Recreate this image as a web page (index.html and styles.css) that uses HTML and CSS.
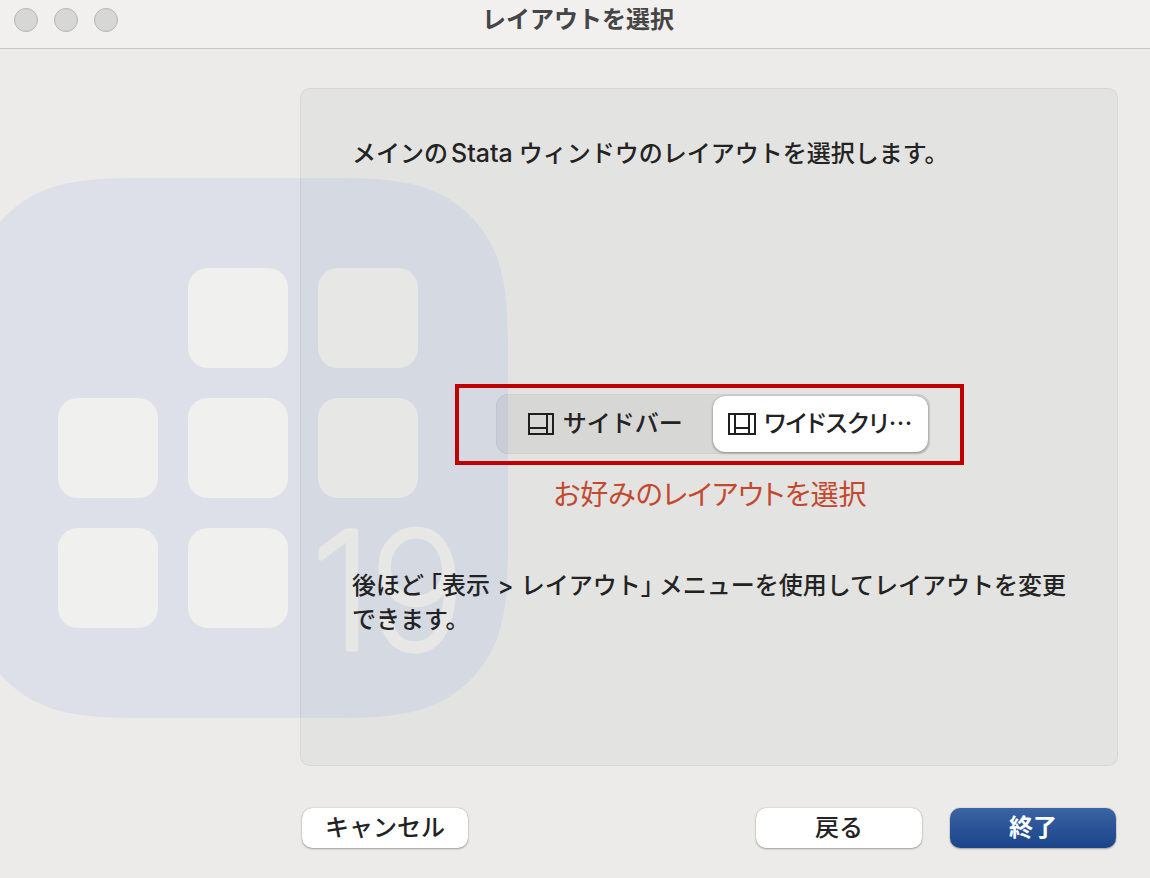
FILE: index.html
```html
<!DOCTYPE html>
<html lang="ja">
<head>
<meta charset="utf-8">
<meta name="viewport" content="width=device-width, initial-scale=1">
<title>レイアウトを選択</title>
<link rel="stylesheet" href="styles.css">
</head>
<body>
<div class="window">
  <header class="titlebar">
    <div class="lights"><span class="light"></span><span class="light"></span><span class="light"></span></div>
    <h1 class="title">レイアウトを選択</h1>
  </header>
  <svg class="logo" viewBox="0 0 540 540" aria-hidden="true">
    <path class="logo-base" d="M199 0H341C399 0 427 0 458 10C492 22 518 48 530 82C540 113 540 141 540 199V341C540 399 540 427 530 458C518 492 492 518 458 530C427 540 399 540 341 540H199C141 540 113 540 82 530C48 518 22 492 10 458C0 427 0 399 0 341V199C0 141 0 113 10 82C22 48 48 22 82 10C113 0 141 0 199 0Z"/>
    <g class="logo-tile">
      <rect x="220" y="90" width="100" height="100" rx="20"/>
      <rect x="350" y="90" width="100" height="100" rx="20"/>
      <rect x="90" y="220" width="100" height="100" rx="20"/>
      <rect x="220" y="220" width="100" height="100" rx="20"/>
      <rect x="350" y="220" width="100" height="100" rx="20"/>
      <rect x="90" y="350" width="100" height="100" rx="20"/>
      <rect x="220" y="350" width="100" height="100" rx="20"/>
    </g>
    <text class="logo-version" x="343 402" y="471">19</text>
  </svg>
  <main class="panel">
    <p class="text">メインの<span class="latin">Stata</span>ウィンドウのレイアウトを選択します。</p>
    <fieldset class="choice" aria-label="レイアウト">
      <div class="segments">
        <div class="segment">
          <input class="segment-input" type="radio" name="layout" id="sidebar">
          <label class="segment-label" for="sidebar">
            <svg class="segment-icon" width="28" height="22" viewBox="0 0 28 22" aria-hidden="true"><path d="M2 1H26V21H2ZM20 1V21M2 15H20"/></svg>
            <span>サイドバー</span>
          </label>
        </div>
        <div class="segment">
          <input class="segment-input" type="radio" name="layout" id="wide" checked>
          <label class="segment-label" for="wide">
            <svg class="segment-icon" width="28" height="22" viewBox="0 0 28 22" aria-hidden="true"><path d="M1 1H27V21H1ZM7 1V21M21 1V21M7 15H21"/></svg>
            <span class="tight">ワイドスクリ…</span>
          </label>
        </div>
      </div>
    </fieldset>
    <p class="note">お好みのレイアウトを選択</p>
    <p class="text">後ほど<span class="open">「</span>表示<span class="arrow"> &gt; </span>レイアウト<span class="close">」</span>メニューを使用してレイアウトを変更できます。</p>
  </main>
  <footer class="actions">
    <button class="button" type="button">キャンセル</button>
    <div class="actions-end">
      <button class="button" type="button">戻る</button>
      <button class="button primary" type="button">終了</button>
    </div>
  </footer>
</div>
</body>
</html>
```
FILE: styles.css
```css
* { box-sizing: border-box; }

body {
  margin: 0;
  background: #ecebe9;
  color: #232323;
  font-family: "Noto Sans CJK JP", sans-serif;
  font-size: 24px;
  font-weight: 500;
  line-height: 34px;
}

.window {
  position: relative;
  display: flex;
  flex-direction: column;
  min-height: 100vh;
  overflow: hidden;
}

.titlebar {
  display: grid;
  grid-template-columns: 1fr auto 1fr;
  align-items: start;
  padding: 0 8px 12px 14px;
  background: #f1f0ee;
  border-bottom: 1px solid #c6c5c3;
}

.lights { display: flex; gap: 16px; padding-top: 8px; }

.light {
  width: 24px;
  height: 24px;
  border: 1px solid #b5b5b3;
  border-radius: 50%;
  background: #d7d7d5;
}

.title {
  margin: 0;
  color: #454545;
  font-size: 24px;
  font-weight: 700;
  line-height: 36px;
}

/* Watermark behind the panel, bleeding off the left edge */
.logo {
  position: absolute;
  top: 178px;
  left: -32px;
  width: 540px;
  height: 540px;
}

.logo-base { fill: #dde0e8; }
.logo-tile { fill: #f0f0ee; }

.logo-version {
  fill: #f0f0ee;
  stroke: #f0f0ee;
  stroke-width: 5px;
  stroke-linejoin: round;
  font-family: Inter, sans-serif;
  font-size: 162px;
  font-weight: 200;
}

.panel {
  position: relative;
  flex: 1;
  display: flex;
  flex-direction: column;
  margin: 39px 32px 0 300px;
  padding: 46px 49px 46px 51px;
  border: 1px solid rgba(0, 0, 0, 0.06);
  border-radius: 10px;
  background: rgba(60, 84, 84, 0.047);
}

.text { margin: 0; }

.latin {
  margin: 0 6px 0 3px;
  font-family: Inter, sans-serif;
  font-size: 25px;
  line-height: 24px;
}

.arrow {
  margin: 0 1px;
  font-family: Inter, sans-serif;
  line-height: 24px;
}

.open, .close { font-feature-settings: "halt"; }
.open { margin-left: 6px; }
.close { margin-right: 6px; }

.choice {
  align-self: center;
  width: 508px;
  max-width: 100%;
  margin: 215px 2px 0 0;
  padding: 6px 30px 7px 37px;
  border: 4px solid #c00000;
}

.segments {
  display: flex;
  gap: 1px;
  width: 434px;
  max-width: 100%;
  padding: 2px;
  border-radius: 13px;
  background: rgba(0, 0, 0, 0.05);
  box-shadow: inset 0 0 1px rgba(0, 0, 0, 0.25);
}

.segment { flex: 1; }

.segment-input {
  position: absolute;
  opacity: 0;
}

.segment-label {
  display: flex;
  align-items: center;
  justify-content: center;
  gap: 8px;
  height: 56px;
  border-radius: 12px;
  white-space: nowrap;
}

.segment-label span { padding-bottom: 4px; }

.segment-input:checked + .segment-label {
  background: #fff;
  box-shadow: 0 0 1px rgba(0, 0, 0, 0.4), 0 1px 3px rgba(0, 0, 0, 0.35);
}

.segment-icon {
  fill: none;
  stroke: #1f1f1f;
  stroke-width: 2px;
}

.tight { font-feature-settings: "palt"; }

.note {
  margin: 8px 0 54px;
  color: #c3492e;
  font-size: 28px;
  font-weight: 400;
  font-feature-settings: "palt";
  line-height: 40px;
  text-align: center;
}

.actions {
  display: flex;
  justify-content: space-between;
  padding: 42px 34px 30px 302px;
}

.actions-end { display: flex; gap: 28px; }

.button {
  width: 166px;
  height: 40px;
  padding: 0 0 4px;
  border: 0;
  border-radius: 10px;
  background: #fff;
  box-shadow: 0 0 1px rgba(0, 0, 0, 0.4), 0 1px 2px rgba(0, 0, 0, 0.3);
  color: inherit;
  font: inherit;
}

.primary {
  background: linear-gradient(#3a64a2, #1a438b);
  color: #fff;
  font-weight: 700;
}
```
